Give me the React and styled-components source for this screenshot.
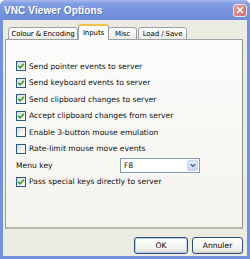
import React from 'react';
import styled, { createGlobalStyle } from 'styled-components';

const GlobalStyle = createGlobalStyle`
  html, body { margin: 0; padding: 0; background: #fff; }
  body { font-family: "DejaVu Sans", Verdana, sans-serif; }
`;

/* outer window */
const Window = styled.div`
  width: 250px;
  height: 259px;
  display: flex;
  flex-direction: column;
  box-sizing: border-box;
  background: #7391dc;
  border-radius: 6px 6px 0 0;
  overflow: hidden;
`;

const TitleBar = styled.div`
  height: 20px;
  flex: none;
  display: flex;
  align-items: center;
  justify-content: space-between;
  padding: 0 3px 0 4px;
  background: linear-gradient(#a7baee 0%, #819de3 18%, #7794de 60%, #6e8cd8 100%);
`;

const Title = styled.span`
  color: #fff;
  font-family: "Liberation Sans", Arial, sans-serif;
  font-weight: bold;
  font-size: 10px;
  letter-spacing: 0.1px;
  text-shadow: 1px 1px 0 rgba(40, 60, 140, 0.4);
`;

const CloseBtn = styled.div`
  width: 14px;
  height: 13px;
  box-sizing: border-box;
  border: 1px solid #f4e6ea;
  border-radius: 3px;
  background: linear-gradient(135deg, #e39a96, #cf6f70);
  display: flex;
  align-items: center;
  justify-content: center;
`;

const Frame = styled.div`
  flex: 1;
  display: flex;
  flex-direction: column;
  margin: 0 3px 3px 3px;
  padding: 4px 4px 0 2px;
  background: #ecebe2;
`;

/* tabs */
const TabRow = styled.div`
  display: flex;
  align-items: flex-end;
  height: 16px;
  padding-left: 3px;
  position: relative;
  z-index: 1;
`;

const Tab = styled.div`
  width: ${p => p.w}px;
  height: ${p => (p.active ? '16px' : '13px')};
  box-sizing: border-box;
  margin-left: ${p => (p.active ? '-1px' : '0')};
  margin-right: ${p => (p.active ? '-1px' : '1px')};
  display: flex;
  align-items: center;
  justify-content: center;
  font-size: 7px;
  letter-spacing: -0.1px;
  color: #000;
  border: 1px solid #9aa2a6;
  border-bottom: ${p => (p.active ? 'none' : '1px solid #9aa2a6')};
  border-top: ${p => (p.active ? '2px solid #f5c04a' : '1px solid #9aa2a6')};
  border-radius: 3px 3px 0 0;
  background: ${p => (p.active ? '#fcfcfb' : 'linear-gradient(#ffffff, #ecebe5)')};
  position: relative;
  z-index: ${p => (p.active ? 2 : 1)};
  white-space: nowrap;
`;

const Panel = styled.div`
  height: 190px;
  box-sizing: border-box;
  border: 1px solid #9aa2a6;
  border-right-color: #8a9295;
  border-bottom: 2px solid #b9b8ad;
  background: linear-gradient(#fcfcfb, #f4f3ee);
  padding: 18px 0 0 10px;
  margin-top: -1px;
  display: flex;
  flex-direction: column;
`;

const Row = styled.div`
  height: 16.5px;
  display: flex;
  align-items: center;
  font-size: 7.6px;
  color: #111;
  white-space: nowrap;
`;

const Box = styled.div`
  width: 10px;
  height: 10px;
  box-sizing: border-box;
  border: 1px solid #2a5a8a;
  background: linear-gradient(135deg, #dcdcd5, #f6f6f3 70%, #fff);
  margin-right: 3px;
  flex: none;
  display: flex;
  align-items: center;
  justify-content: center;
`;

const Label = styled.span`
  width: 104px;
`;

const Select = styled.div`
  width: 80px;
  height: 15px;
  box-sizing: border-box;
  border: 1px solid #7f9db9;
  background: #fff;
  display: flex;
  align-items: center;
  justify-content: space-between;
  padding: 1px 1px 1px 3px;
`;

const ArrowBtn = styled.div`
  width: 11px;
  height: 11px;
  box-sizing: border-box;
  border: 1px solid #c5d3f4;
  border-radius: 2px;
  background: linear-gradient(#e4ecfd, #c4d4f8);
  display: flex;
  align-items: center;
  justify-content: center;
`;

/* dialog buttons */
const ButtonRow = styled.div`
  display: flex;
  justify-content: flex-end;
  gap: 4px;
  margin-top: 8px;
`;

const Button = styled.button`
  width: ${p => p.w}px;
  height: 17px;
  box-sizing: border-box;
  padding: 0;
  font-family: "DejaVu Sans", Verdana, sans-serif;
  font-size: 7.6px;
  color: #000;
  border: 1px solid #2f4f7f;
  border-radius: 3px;
  background: linear-gradient(#ffffff, #f2f2ee 70%, #d9d8d0);
  box-shadow: ${p => (p.primary ? 'inset 0 0 0 1px #b9ccf2' : 'inset 0 -1px 0 #d6d0c5')};
`;

const Check = () => (
  <svg width="8" height="8" viewBox="0 0 8 8">
    <path d="M1.2 3.8 L3.1 5.8 L6.9 1.8" fill="none" stroke="#27a127" strokeWidth="1.6" />
  </svg>
);

const CheckRow = ({ checked, children }) => (
  <Row>
    <Box>{checked && <Check />}</Box>
    {children}
  </Row>
);

const options = [
  { text: 'Send pointer events to server', checked: true },
  { text: 'Send keyboard events to server', checked: true },
  { text: 'Send clipboard changes to server', checked: true },
  { text: 'Accept clipboard changes from server', checked: true },
  { text: 'Enable 3-button mouse emulation', checked: false },
  { text: 'Rate-limit mouse move events', checked: false },
];

const tabs = [
  { name: 'Colour & Encoding', w: 70 },
  { name: 'Inputs', w: 31 },
  { name: 'Misc', w: 29 },
  { name: 'Load / Save', w: 49 },
];

export default function App() {
  return (
    <>
      <GlobalStyle />
      <Window>
        <TitleBar>
          <Title>VNC Viewer Options</Title>
          <CloseBtn>
            <svg width="8" height="8" viewBox="0 0 8 8">
              <path d="M1 1 L7 7 M7 1 L1 7" stroke="#fff" strokeWidth="1.6" />
            </svg>
          </CloseBtn>
        </TitleBar>
        <Frame>
          <TabRow>
            {tabs.map(t => (
              <Tab key={t.name} w={t.w} active={t.name === 'Inputs'}>{t.name}</Tab>
            ))}
          </TabRow>
          <Panel>
            {options.map(o => (
              <CheckRow key={o.text} checked={o.checked}>{o.text}</CheckRow>
            ))}
            <Row>
              <Label>Menu key</Label>
              <Select>
                <span>F8</span>
                <ArrowBtn>
                  <svg width="6" height="5" viewBox="0 0 6 5">
                    <path d="M0.8 1.2 L3 3.4 L5.2 1.2" fill="none" stroke="#4d6185" strokeWidth="1.3" />
                  </svg>
                </ArrowBtn>
              </Select>
            </Row>
            <CheckRow checked>Pass special keys directly to server</CheckRow>
          </Panel>
          <ButtonRow>
            <Button w={54} primary>OK</Button>
            <Button w={51}>Annuler</Button>
          </ButtonRow>
        </Frame>
      </Window>
    </>
  );
}
